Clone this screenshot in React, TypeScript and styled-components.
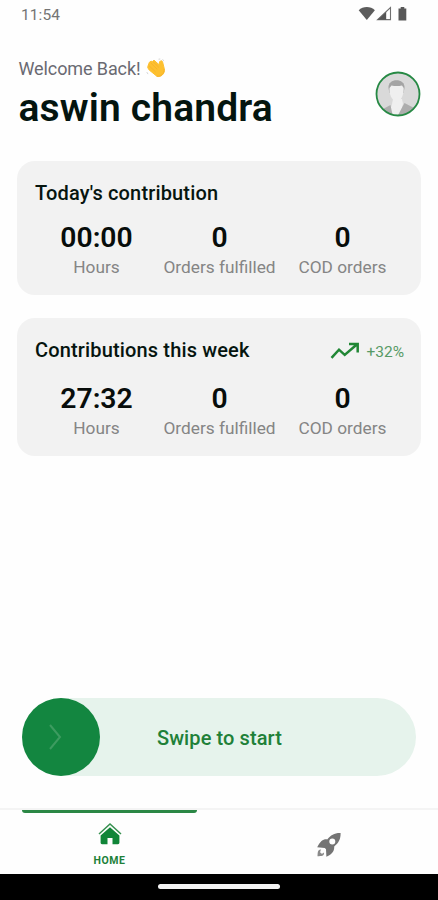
import React from 'react';
import styled, { createGlobalStyle } from 'styled-components';

const GlobalStyle = createGlobalStyle`
  * { box-sizing: border-box; }
  html, body { margin: 0; padding: 0; background: #fefefe; }
  body { font-family: Roboto, "Liberation Sans", sans-serif; }
`;

const Screen = styled.div`
  width: 438px;
  height: 900px;
  display: flex;
  flex-direction: column;
  background: #fefefe;
  overflow: hidden;
`;

const StatusBar = styled.header`
  height: 28px;
  padding: 0 30px 0 21px;
  display: flex;
  align-items: center;
  justify-content: space-between;
`;

const Clock = styled.time`
  font-size: 15.5px;
  line-height: 28px;
  padding-top: 1px;
  letter-spacing: 0.1px;
  color: #747474;
`;

const StatusIcons = styled.div`
  display: flex;
  align-items: center;
`;

const Greeting = styled.section`
  height: 133px;
  padding: 29px 17px 0 18.5px;
  display: flex;
  justify-content: space-between;
`;

const Welcome = styled.div`
  display: flex;
  align-items: center;
  gap: 5px;
  height: 22px;
  font-size: 18px;
  letter-spacing: -0.1px;
  color: #6a6a72;
`;

const UserName = styled.h1`
  margin: 5px 0 0;
  font-size: 39px;
  line-height: 48px;
  font-weight: 600;
  letter-spacing: 0.15px;
  color: #04150f;
  white-space: nowrap;
`;

const Avatar = styled.svg`
  width: 46px;
  height: 46px;
  margin-top: 14px;
`;

const Cards = styled.main`
  flex: 1;
  padding: 0 17px;
  display: flex;
  flex-direction: column;
  gap: 23px;
`;

const Card = styled.section<{ $height: number }>`
  height: ${(p) => p.$height}px;
  padding: 19px 17px 15px 18px;
  border-radius: 18px;
  background: #f2f2f2;
  display: flex;
  flex-direction: column;
  justify-content: space-between;
`;

const CardHeader = styled.div`
  display: flex;
  align-items: center;
  justify-content: space-between;
  height: 25px;
`;

const CardTitle = styled.h2`
  margin: 0;
  font-size: 20px;
  font-weight: 500;
  letter-spacing: 0.15px;
  color: #06150f;
`;

const Trend = styled.div`
  display: flex;
  align-items: center;
  gap: 6px;
  padding-top: 3px;
  font-size: 15.5px;
  color: #579a66;
`;

const TrendValue = styled.span`
  padding-top: 2px;
`;

const Stats = styled.div`
  display: grid;
  grid-template-columns: repeat(3, 123px);
`;

const Stat = styled.div`
  display: flex;
  flex-direction: column;
  align-items: center;
`;

const StatValue = styled.div`
  font-size: 28.3px;
  line-height: 34px;
  padding-top: 1px;
  font-weight: 600;
  color: #080d0b;
`;

const StatLabel = styled.div`
  font-size: 17.3px;
  line-height: 25px;
  color: #858585;
  white-space: nowrap;
`;

const SwipeTrack = styled.div`
  height: 78px;
  margin: 0 22px 32px;
  border-radius: 39px;
  background: #e6f3ec;
  display: grid;
  grid-template-columns: 78px 1fr 78px;
  align-items: center;
`;

const SwipeThumb = styled.div`
  width: 78px;
  height: 78px;
  border-radius: 50%;
  background: #138640;
  display: flex;
  align-items: center;
  justify-content: center;
  padding-right: 12px;
`;

const SwipeText = styled.span`
  text-align: center;
  font-size: 20px;
  font-weight: 500;
  letter-spacing: 0.1px;
  color: #208038;
  padding: 1px 0 0 1px;
`;

const TabBar = styled.nav`
  height: 66px;
  border-top: 2px solid #f4f4f4;
  display: grid;
  grid-template-columns: 1fr 1fr;
`;

const Tab = styled.div`
  display: flex;
  flex-direction: column;
  align-items: center;
`;

const Indicator = styled.div<{ $active?: boolean }>`
  width: 175px;
  height: 3px;
  border-radius: 0 0 3px 3px;
  background: ${(p) => (p.$active ? '#2b8745' : 'transparent')};
`;

const TabIcon = styled.svg<{ $top: number }>`
  margin-top: ${(p) => p.$top}px;
`;

const TabLabel = styled.span`
  margin-top: 9px;
  font-size: 10.5px;
  line-height: 13px;
  font-weight: 700;
  letter-spacing: 0.5px;
  color: #208038;
`;

const SystemBar = styled.footer`
  height: 26px;
  background: #000;
  display: flex;
  justify-content: center;
`;

const GestureHandle = styled.div`
  width: 122px;
  height: 5px;
  margin-top: 10px;
  border-radius: 3px;
  background: #f4f4f4;
`;

function WaveIcon() {
  return (
    <svg width="20" height="20" viewBox="0 0 20 20">
      <path d="M2 8 3.4 4.2 5 3.3 6.5 3.5 8 2.2 13 6.7 13.7 3.5 15.6 2.7 16.6 4 18.3 10.8C19.3 15.6 14.7 19.8 10.8 18.2L3.2 12 1.7 9.6Z" fill="#fdc02f" stroke="#fdc02f" strokeWidth="1" strokeLinejoin="round" />
      <path d="M3 7.7 9.3 13.6M5 5.1 11 11M7.5 4.2 12.7 9.2M11 18.2C15 19.1 18.7 15.4 18 11.3" fill="none" stroke="#f3ad2a" strokeWidth=".7" strokeLinecap="round" />
      <path d="M12.5 1.2 14.3 1M16.6 1.3 17.7 3.1M.8 14.1 2 16.1" stroke="#c9c9c9" strokeWidth=".8" />
    </svg>
  );
}

function StatusSymbols() {
  return (
    <svg width="50" height="16" viewBox="0 0 50 16">
      <path d="M.7 4.2C5-.1 12.6-.1 16.9 4.2L8.8 14Z" fill="#5c5c5c" />
      <path d="M19.6 13.6 32.5 1.6V13.6Z" fill="#fff" stroke="#707070" strokeWidth="1.1" />
      <path d="M19.6 13.8 28.2 5.8V13.8Z" fill="#555" />
      <path d="M42.7 1h3.6v1.5h2v11.9h-7.8V2.5h2.2Z" fill="#585858" />
    </svg>
  );
}

function ProfilePhoto() {
  return (
    <Avatar viewBox="0 0 46 46">
      <defs>
        <clipPath id="avatar-clip"><circle cx="23" cy="23" r="21.5" /></clipPath>
      </defs>
      <circle cx="23" cy="23" r="21.6" fill="#d9d9d9" />
      <g clipPath="url(#avatar-clip)">
        <path d="M13 46 17 33 18 28H27L28 33 24 46Z" fill="#efefef" />
        <path d="M8 38 15.5 34 18 46H8ZM22 46 29.5 32 41 38V46Z" fill="#adadad" />
        <path d="M13.5 17C12.5 6.5 30.5 6.5 29.5 17L28.5 22H14.5Z" fill="#a4a4a4" />
        <path d="M14.5 17 16.5 14.4C20 15.2 24 15 27 14.4L28.7 17C29 23 26.5 30 21.5 31C16.5 29 14 23 14.5 17Z" fill="#efefef" />
      </g>
      <circle cx="23" cy="23" r="21.5" fill="none" stroke="#268944" strokeWidth="1.8" />
    </Avatar>
  );
}

function TrendIcon() {
  return (
    <svg width="30" height="18" viewBox="0 0 30 18">
      <path d="M1.5 15.8 9 7.7 14.7 12.9 26.8 2.5M19 2H27.7V10.5" fill="none" stroke="#218735" strokeWidth="2.5" />
    </svg>
  );
}

interface StatItem { value: string; label: string }

function StatGrid({ items }: { items: StatItem[] }) {
  return (
    <Stats>
      {items.map((item) => (
        <Stat key={item.label}>
          <StatValue>{item.value}</StatValue>
          <StatLabel>{item.label}</StatLabel>
        </Stat>
      ))}
    </Stats>
  );
}

const statsFor = (hours: string): StatItem[] => [
  { value: hours, label: 'Hours' },
  { value: '0', label: 'Orders fulfilled' },
  { value: '0', label: 'COD orders' },
];

export default function App() {
  return (
    <>
      <GlobalStyle />
      <Screen>
        <StatusBar>
          <Clock>11:54</Clock>
          <StatusIcons><StatusSymbols /></StatusIcons>
        </StatusBar>
        <Greeting>
          <div>
            <Welcome>Welcome Back! <WaveIcon /></Welcome>
            <UserName>aswin chandra</UserName>
          </div>
          <ProfilePhoto />
        </Greeting>
        <Cards>
          <Card $height={134}>
            <CardHeader><CardTitle>Today's contribution</CardTitle></CardHeader>
            <StatGrid items={statsFor('00:00')} />
          </Card>
          <Card $height={138}>
            <CardHeader>
              <CardTitle>Contributions this week</CardTitle>
              <Trend><TrendIcon /><TrendValue>+32%</TrendValue></Trend>
            </CardHeader>
            <StatGrid items={statsFor('27:32')} />
          </Card>
        </Cards>
        <SwipeTrack>
          <SwipeThumb>
            <svg width="16" height="28" viewBox="0 0 16 28">
              <path d="M3 2 13 14 3 26" fill="none" stroke="#3d9b60" strokeWidth="2" />
            </svg>
          </SwipeThumb>
          <SwipeText>Swipe to start</SwipeText>
        </SwipeTrack>
        <TabBar>
          <Tab>
            <Indicator $active />
            <TabIcon $top={9} width="24" height="23" viewBox="0 0 24 23">
              <path d="M1 12 12 2 23 12" fill="none" stroke="#36904f" strokeWidth="1.5" />
              <path d="M2.6 13.4 12 5.2 21.4 13.4V20.8Q21.4 22.2 20 22.2H14.5V16H9.5V22.2H4Q2.6 22.2 2.6 20.8Z" fill="#108538" />
            </TabIcon>
            <TabLabel>HOME</TabLabel>
          </Tab>
          <Tab>
            <Indicator />
            <TabIcon $top={19} width="26" height="26" viewBox="0 0 26 26">
              <path fillRule="evenodd" d="M24.6 1C18.5.8 14.8 3 11.2 7.4C7 7 4.5 9 1.2 15.3L8.8 16 10 17.2 10.4 24.8C16.4 22 18.5 18.8 18.2 14.4C22.7 10.8 24.8 7 24.6 1ZM16.3 6.4a3 3 0 1 1 0 6a3 3 0 0 1 0-6Z" fill="#747474" />
              <path d="M5.2 17.5C1.4 17.4 1.8 20.5 1.5 24.2C5.2 24 8.7 24.3 8 20.2C6.8 22.3 5 21.7 4.4 20.8C4 19.5 4.5 18.5 5.2 17.5Z" fill="#8a8a8a" />
            </TabIcon>
          </Tab>
        </TabBar>
        <SystemBar><GestureHandle /></SystemBar>
      </Screen>
    </>
  );
}
